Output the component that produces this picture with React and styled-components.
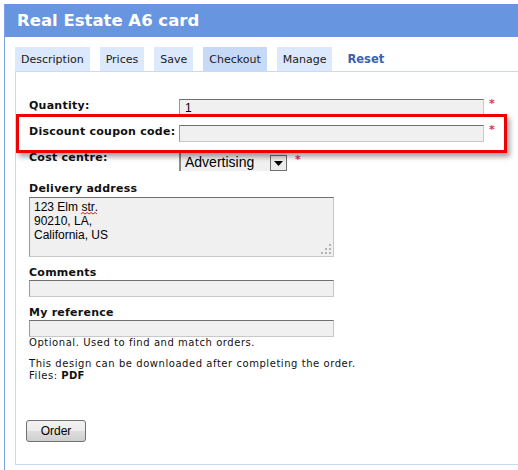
import styled, { createGlobalStyle } from "styled-components";

const GlobalStyle = createGlobalStyle`
	html, body {
		margin: 0;
		padding: 0;
		background: #ffffff;
		overflow: hidden;
	}
	body {
		font-family: "DejaVu Sans", Verdana, sans-serif;
	}
`;

const COLORS = {
	header: "#6895e0",
	frameLine: "#7ca2e6",
	tab: "#dce8fb",
	tabActive: "#c6d9f7",
	panelBorder: "#c8daf7",
	field: "#f0f0f0",
	red: "#f00000",
	star: "#e8323c",
};

const tabs = ["Description", "Prices", "Save", "Checkout", "Manage"];

const App = () => {
	return (
		<>
			<GlobalStyle />
			<Page>
				<Frame>
					<Header>Real Estate A6 card</Header>
					<FrameBody>
						<TabBar>
							{tabs.map((t) => (
								<Tab key={t} active={t === "Checkout"}>
									{t}
								</Tab>
							))}
							<ResetLink>Reset</ResetLink>
						</TabBar>
						<Panel>
							<Highlight />
							<Fieldset>
								<Row>
									<Label>Quantity:</Label>
									<TextInput width={305} defaultValue="1" />
									<Star>*</Star>
								</Row>
								<Row>
									<Label>Discount coupon code:</Label>
									<TextInput width={305} defaultValue="" />
									<Star>*</Star>
								</Row>
								<Row>
									<Label>Cost centre:</Label>
									<Select>
										<SelectValue>Advertising</SelectValue>
										<SelectArrow>
											<svg width="9" height="5" viewBox="0 0 9 5">
												<path d="M0 0 H9 L4.5 5 Z" fill="#000" />
											</svg>
										</SelectArrow>
									</Select>
									<Star offset={8}>*</Star>
								</Row>
								<Block top={11}>
									<Label>Delivery address</Label>
									<TextArea>
										123 Elm{" "}
										<Misspelled>
											str
											<Squiggle width="16" height="3" viewBox="0 0 16 3">
												<path
													d="M0 2 L2 0.5 L4 2 L6 0.5 L8 2 L10 0.5 L12 2 L14 0.5 L16 2"
													fill="none"
													stroke="#e02020"
													strokeWidth="1"
												/>
											</Squiggle>
										</Misspelled>
										.
										<br />
										90210, LA,
										<br />
										California, US
										<Grip width="10" height="10" viewBox="0 0 10 10">
											<rect x="8" y="0" width="2" height="2" fill="#b4b4b4" />
											<rect x="4" y="4" width="2" height="2" fill="#b4b4b4" />
											<rect x="8" y="4" width="2" height="2" fill="#b4b4b4" />
											<rect x="0" y="8" width="2" height="2" fill="#b4b4b4" />
											<rect x="4" y="8" width="2" height="2" fill="#b4b4b4" />
											<rect x="8" y="8" width="2" height="2" fill="#b4b4b4" />
										</Grip>
									</TextArea>
								</Block>
								<Block top={9}>
									<Label>Comments</Label>
									<TextInput width={305} defaultValue="" />
								</Block>
								<Block top={9}>
									<Label>My reference</Label>
									<TextInput width={305} defaultValue="" />
									<Note>Optional. Used to find and match orders.</Note>
								</Block>
								<Block top={9}>
									<Note>This design can be downloaded after completing the order.</Note>
									<Note>
										Files: <b>PDF</b>
									</Note>
								</Block>
							</Fieldset>
							<Actions>
								<OrderButton>Order</OrderButton>
							</Actions>
						</Panel>
					</FrameBody>
				</Frame>
			</Page>
		</>
	);
};

const Page = styled.div`
	width: 518px;
	height: 470px;
	padding: 4px 0 0 4px;
	box-sizing: border-box;
	overflow: hidden;
`;
const Frame = styled.div`
	width: 540px;
	height: 466px;
	border-left: 1px solid ${COLORS.frameLine};
	display: flex;
	flex-direction: column;
`;
const Header = styled.div`
	height: 33px;
	line-height: 33px;
	background: ${COLORS.header};
	color: #ffffff;
	font-family: "DejaVu Sans", Verdana, sans-serif;
	font-weight: bold;
	font-size: 16.5px;
	padding-left: 12px;
	white-space: nowrap;
`;
const FrameBody = styled.div`
	padding: 10px 0 0 10px;
	display: flex;
	flex-direction: column;
`;
const TabBar = styled.div`
	display: flex;
	align-items: stretch;
	gap: 10px;
	height: 24px;
`;
const Tab = styled.div`
	background: ${(p) => (p.active ? COLORS.tabActive : COLORS.tab)};
	color: #1a1a1a;
	font-size: 11px;
	padding: 1px 6px 0 6px;
	line-height: 23px;
	cursor: pointer;
`;
const ResetLink = styled.div`
	color: #3b62ab;
	font-weight: bold;
	font-size: 11.5px;
	padding: 1px 0 0 5px;
	line-height: 23px;
	cursor: pointer;
`;
const Panel = styled.div`
	position: relative;
	border: 1px solid ${COLORS.panelBorder};
	border-right: none;
	height: 392px;
	display: flex;
	flex-direction: column;
`;
const Highlight = styled.div`
	position: absolute;
	left: 0;
	top: 42px;
	width: 491px;
	height: 39px;
	box-sizing: border-box;
	border: 3px solid ${COLORS.red};
	box-shadow: 3px 4px 5px rgba(0, 0, 0, 0.35);
	pointer-events: none;
	z-index: 2;
`;
const Fieldset = styled.div`
	padding: 27px 13px 0 13px;
	display: flex;
	flex-direction: column;
`;
const Row = styled.div`
	display: flex;
	align-items: flex-start;
	margin-bottom: 9px;
	&:nth-child(3) {
		margin-bottom: 0;
	}
`;
const Block = styled.div`
	display: flex;
	flex-direction: column;
	align-items: flex-start;
	margin-top: ${(p) => p.top}px;
`;
const Label = styled.div`
	width: 150px;
	flex-shrink: 0;
	font-weight: bold;
	font-size: 11px;
	letter-spacing: 0.25px;
	line-height: 14px;
	color: #111111;
	white-space: nowrap;
`;
const TextInput = styled.input`
	width: ${(p) => p.width}px;
	height: 17px;
	box-sizing: border-box;
	margin: 0;
	padding: 0 5px;
	background: ${COLORS.field};
	border: 1px solid;
	border-color: #6f6f6f #c8c8c8 #c8c8c8 #9a9a9a;
	font-family: "Liberation Sans", Arial, sans-serif;
	font-size: 12px;
	color: #000000;
	outline: none;
`;
const Star = styled.span`
	color: ${COLORS.star};
	font-weight: bold;
	font-size: 11px;
	line-height: 12px;
	margin-left: ${(p) => p.offset || 5}px;
	margin-top: ${(p) => (p.offset ? 3 : -1)}px;
`;
const Select = styled.div`
	width: 108px;
	height: 20px;
	box-sizing: border-box;
	display: flex;
	align-items: flex-end;
	background: ${COLORS.field};
	border-left: 2px solid #8a8a8a;
	border-top: 1px solid #9a9a9a;
`;
const SelectValue = styled.div`
	flex: 1;
	font-family: "Liberation Sans", Arial, sans-serif;
	font-size: 14px;
	line-height: 18px;
	padding-left: 4px;
	color: #000000;
	align-self: center;
`;
const SelectArrow = styled.div`
	width: 17px;
	height: 16px;
	box-sizing: border-box;
	border: 1px solid #707070;
	background: #ececec;
	display: flex;
	align-items: center;
	justify-content: center;
`;
const TextArea = styled.div`
	position: relative;
	margin-top: 1px;
	width: 305px;
	height: 60px;
	box-sizing: border-box;
	padding: 2px 4px;
	background: ${COLORS.field};
	border: 1px solid;
	border-color: #6f6f6f #c8c8c8 #c8c8c8 #9a9a9a;
	font-family: "Liberation Sans", Arial, sans-serif;
	font-size: 12px;
	line-height: 14px;
	color: #000000;
`;
const Misspelled = styled.span`
	position: relative;
`;
const Squiggle = styled.svg`
	position: absolute;
	left: 0;
	bottom: -1px;
`;
const Grip = styled.svg`
	position: absolute;
	right: 2px;
	bottom: 2px;
`;
const Note = styled.div`
	font-size: 10px;
	letter-spacing: 0.55px;
	line-height: 12px;
	color: #111111;
	white-space: nowrap;
	b {
		font-weight: bold;
		letter-spacing: 0.3px;
	}
`;
const Actions = styled.div`
	padding: 38px 0 0 10px;
`;
const OrderButton = styled.button`
	width: 60px;
	height: 22px;
	margin: 0;
	padding: 0;
	border: 1px solid #707070;
	border-radius: 3px;
	background: linear-gradient(#f2f2f2 0%, #ebebeb 50%, #dddddd 51%, #cfcfcf 100%);
	font-family: "Liberation Sans", Arial, sans-serif;
	font-size: 12px;
	color: #000000;
	cursor: pointer;
`;

export default App;
